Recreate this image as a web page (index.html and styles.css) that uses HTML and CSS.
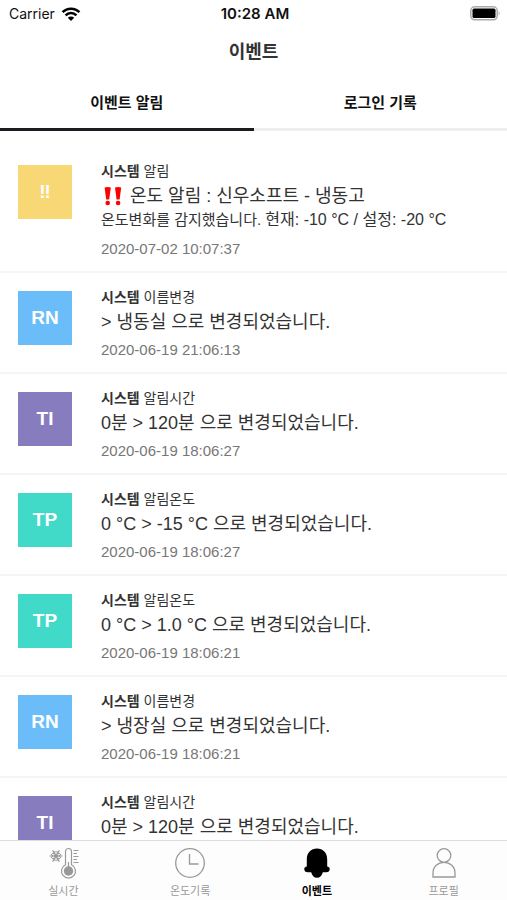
FILE: index.html
```html
<!DOCTYPE html>
<html lang="ko">
<head>
<meta charset="utf-8">
<meta name="viewport" content="width=device-width, initial-scale=1">
<title>이벤트</title>
<link rel="stylesheet" href="styles.css">
</head>
<body>
<div class="app">
  <div class="status">
    <div class="carrier">
      <span>Carrier</span>
      <svg width="20" height="14" viewBox="0 0 20 14" aria-hidden="true">
        <g fill="none" stroke="#000" stroke-width="2.6">
          <path d="M1.6 5.2C6.2.5 13.8.5 18.4 5.2"/>
          <path d="M4.6 8.3C7.6 5.3 12.4 5.3 15.4 8.3"/>
        </g>
        <path d="M10 14 6.8 10.7C8.6 9.1 11.4 9.1 13.2 10.7Z"/>
      </svg>
    </div>
    <time class="clock">10:28 AM</time>
    <svg class="battery" width="31" height="15" viewBox="0 0 31 15" aria-hidden="true">
      <rect x=".8" y=".8" width="26.4" height="13" rx="4" fill="#fff" stroke="#aaa" stroke-width="1.5"/>
      <rect x="2.5" y="2.6" width="23" height="9.4" rx="1.6"/>
      <path d="M28.6 5.2Q30.6 7.3 28.6 9.4Z" fill="#aaa"/>
    </svg>
  </div>

  <h1 class="title">이벤트</h1>

  <div class="tabs" role="tablist">
    <button class="tab tab-on" role="tab" aria-selected="true">이벤트 알림</button>
    <button class="tab" role="tab" aria-selected="false">로그인 기록</button>
  </div>

  <ul class="list">
    <li class="event">
      <div class="badge yellow">‼</div>
      <div class="body">
        <p class="meta"><b>시스템</b> 알림</p>
        <p class="message">
          <svg class="alert" width="20" height="20" viewBox="0 0 20 20" role="img" aria-label="‼">
            <g fill="#f00">
              <path d="M1.6 1.4Q4.7.4 7.8 1.4L6.2 13.4H3.2Z"/><circle cx="4.7" cy="17" r="2.3"/>
              <path d="M12 1.4Q15.1.4 18.2 1.4L16.6 13.4H13.6Z"/><circle cx="15.1" cy="17" r="2.3"/>
            </g>
          </svg>
          온도 알림 : 신우소프트 - 냉동고</p>
        <p class="detail">온도변화를 감지했습니다. <span class="reading">현재: -10 °C / 설정: -20 °C</span></p>
        <time class="when">2020-07-02 10:07:37</time>
      </div>
    </li>
    <li class="event">
      <div class="badge blue">RN</div>
      <div class="body">
        <p class="meta"><b>시스템</b> 이름변경</p>
        <p class="message">&gt; 냉동실 으로 변경되었습니다.</p>
        <time class="when">2020-06-19 21:06:13</time>
      </div>
    </li>
    <li class="event">
      <div class="badge purple">TI</div>
      <div class="body">
        <p class="meta"><b>시스템</b> 알림시간</p>
        <p class="message">0분 &gt; 120분 으로 변경되었습니다.</p>
        <time class="when">2020-06-19 18:06:27</time>
      </div>
    </li>
    <li class="event">
      <div class="badge teal">TP</div>
      <div class="body">
        <p class="meta"><b>시스템</b> 알림온도</p>
        <p class="message">0 °C &gt; -15 °C 으로 변경되었습니다.</p>
        <time class="when">2020-06-19 18:06:27</time>
      </div>
    </li>
    <li class="event">
      <div class="badge teal">TP</div>
      <div class="body">
        <p class="meta"><b>시스템</b> 알림온도</p>
        <p class="message">0 °C &gt; 1.0 °C 으로 변경되었습니다.</p>
        <time class="when">2020-06-19 18:06:21</time>
      </div>
    </li>
    <li class="event">
      <div class="badge blue">RN</div>
      <div class="body">
        <p class="meta"><b>시스템</b> 이름변경</p>
        <p class="message">&gt; 냉장실 으로 변경되었습니다.</p>
        <time class="when">2020-06-19 18:06:21</time>
      </div>
    </li>
    <li class="event">
      <div class="badge purple">TI</div>
      <div class="body">
        <p class="meta"><b>시스템</b> 알림시간</p>
        <p class="message">0분 &gt; 120분 으로 변경되었습니다.</p>
      </div>
    </li>
  </ul>

  <nav class="nav">
    <a class="nav-item" href="#live">
      <svg width="32" height="32" viewBox="0 0 32 32" fill="none" stroke="#999" aria-hidden="true">
        <g stroke-width="1.1">
          <path d="M2.5 9H15.5M5.7 3.4 12.3 14.6M12.3 3.4 5.7 14.6"/>
          <path d="M4 7.2 6 9 4 10.8M14 7.2 12 9 14 10.8M5 6.3 7.6 6.6 8.2 4M9.8 4 10.4 6.6 13 6.3M5 11.7 7.6 11.4 8.2 14M9.8 14 10.4 11.4 13 11.7"/>
          <circle cx="9" cy="9" r="1.5"/>
        </g>
        <path stroke-width="1.2" d="M18.5 17.8V4.5a3 3 0 0 1 6 0V17.8a7 7 0 1 1-6 0Z"/>
        <circle cx="21.5" cy="24" r="4.7" fill="#999" stroke="none"/>
        <path stroke-width="1.2" d="M21.5 15V24M26.5 3.5H31.5M26.5 6.5H30M26.5 9.5H31.5M26.5 12.5H30M26.5 15.5H31.5"/>
      </svg>
      <span>실시간</span>
    </a>
    <a class="nav-item" href="#records">
      <svg width="32" height="32" viewBox="0 0 32 32" fill="none" stroke="#999" stroke-width="1.3" aria-hidden="true">
        <circle cx="16" cy="16" r="14.3"/><path d="M15.5 7V17H24.5"/>
      </svg>
      <span>온도기록</span>
    </a>
    <a class="nav-item nav-on" href="#events" aria-current="page">
      <svg width="32" height="32" viewBox="0 0 32 32" aria-hidden="true">
        <path d="M5.8 19.5V12.5C5.8 5.5 10 1.5 16 1.5S26.2 5.5 26.2 12.5V19.5C28.5 20 29 21.4 28.6 23C28.2 24.5 27 25.2 25.4 25.2H21.8C21 28.7 19 30.7 16 30.7S11 28.7 10.2 25.2H6.6C5 25.2 3.8 24.5 3.4 23C3 21.4 3.5 20 5.8 19.5Z"/>
      </svg>
      <span>이벤트</span>
    </a>
    <a class="nav-item" href="#profile">
      <svg width="32" height="32" viewBox="0 0 32 32" fill="none" stroke="#999" stroke-width="1.3" aria-hidden="true">
        <circle cx="16" cy="8.5" r="6.8"/>
        <path d="M5 30V25.5C5 19.5 10 15.3 16 15.3S27 19.5 27 25.5V30Z"/>
      </svg>
      <span>프로필</span>
    </a>
  </nav>
</div>
</body>
</html>
```
FILE: styles.css
```css
* {
  box-sizing: border-box;
}

body {
  margin: 0;
  background: #fff;
  color: #333;
  font-family: "Liberation Sans", "Noto Sans CJK KR", sans-serif;
}

.app {
  display: flex;
  flex-direction: column;
  height: 100vh;
  overflow: hidden;
}

.status {
  display: grid;
  grid-template-columns: 1fr auto 1fr;
  align-items: center;
  height: 27px;
  padding: 0 6px 0 9px;
  color: #111;
  font: 14px/20px Inter, sans-serif;
}

.carrier {
  display: flex;
  align-items: center;
  gap: 6px;
}

.clock {
  font-size: 15px;
  font-weight: 600;
}

.battery {
  justify-self: end;
}

.title {
  margin: 0;
  font-size: 18px;
  line-height: 50px;
  text-align: center;
}

.tabs {
  display: flex;
}

.tab {
  flex: 1;
  height: 54px;
  padding: 0;
  border: 0;
  border-bottom: 3px solid #eee;
  background: none;
  color: #111;
  font: bold 15px/20px "Liberation Sans", "Noto Sans CJK KR", sans-serif;
}

.tab-on {
  border-color: #1c1c20;
}

.list {
  flex: 1;
  min-height: 0;
  margin: 0;
  padding: 16px 0 0;
  overflow: hidden;
  list-style: none;
}

.event {
  display: flex;
  gap: 29px;
  padding: 14px 18px 12px;
  border-bottom: 2px solid #f5f5f5;
}

.badge {
  flex: none;
  width: 54px;
  height: 54px;
  margin-top: 4px;
  color: #fff;
  font-size: 19px;
  font-weight: bold;
  line-height: 54px;
  text-align: center;
}

.yellow { background: #f8d775; }
.blue { background: #6bbdf9; }
.purple { background: #877cbd; }
.teal { background: #41d9c8; }

.body {
  min-width: 0;
}

.meta,
.message,
.detail {
  margin: 0;
  white-space: nowrap;
}

.meta {
  font-size: 14px;
  line-height: 20px;
}

.message {
  font-size: 18px;
  line-height: 30px;
}

.alert {
  margin-right: 2px;
  margin-left: 2px;
  vertical-align: -4px;
}

.detail {
  margin-bottom: 10px;
  font-size: 15px;
  line-height: 18px;
}

.reading {
  font-size: 16px;
}

.when {
  display: block;
  margin-top: 3px;
  color: #777;
  font-size: 15px;
  line-height: 20px;
}

.nav {
  display: flex;
  flex: none;
  height: 60px;
  border-top: 1px solid #ddd;
  background: #fdfdfd;
}

.nav-item {
  display: flex;
  flex: 1;
  flex-direction: column;
  align-items: center;
  gap: 4px;
  padding-top: 6px;
  color: #999;
  font-size: 11px;
  line-height: 16px;
  text-decoration: none;
}

.nav-on {
  color: #000;
  font-weight: bold;
}
```
